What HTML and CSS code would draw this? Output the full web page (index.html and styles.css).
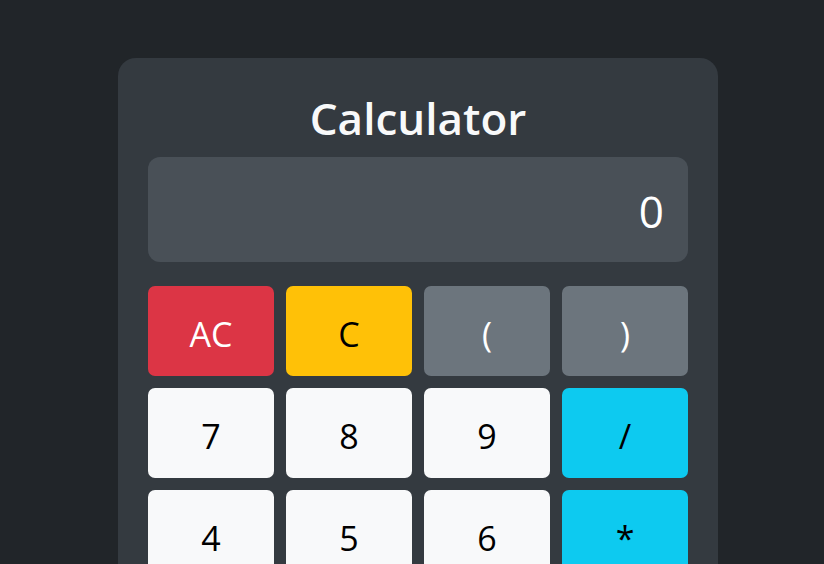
FILE: index.html
```html
<!DOCTYPE html>
<html lang="en">
<head>
<meta charset="utf-8">
<title>Calculator</title>
<link rel="stylesheet" href="styles.css">
</head>
<body>
<main class="calc">
  <h1 class="calc-title">Calculator</h1>
  <div class="calc-display">0</div>
  <div class="calc-keys">
    <button class="key key-danger">AC</button>
    <button class="key key-warning">C</button>
    <button class="key key-secondary">(</button>
    <button class="key key-secondary">)</button>
    <button class="key key-light">7</button>
    <button class="key key-light">8</button>
    <button class="key key-light">9</button>
    <button class="key key-info">/</button>
    <button class="key key-light">4</button>
    <button class="key key-light">5</button>
    <button class="key key-light">6</button>
    <button class="key key-info">*</button>
    <button class="key key-light">1</button>
    <button class="key key-light">2</button>
    <button class="key key-light">3</button>
    <button class="key key-info">-</button>
    <button class="key key-light">0</button>
    <button class="key key-light">.</button>
    <button class="key key-success">=</button>
    <button class="key key-info">+</button>
  </div>
</main>
</body>
</html>
```

FILE: styles.css
```css
* { box-sizing: border-box; }
html, body { margin: 0; padding: 0; }
body {
  background: #212529;
  font-family: "Open Sans", "Noto Sans", "Liberation Sans", sans-serif;
  color: #f8f9fa;
  display: flex;
  justify-content: center;
  padding: 58px 0 0 12px;
}
.calc {
  width: 600px;
  background: #343a40;
  border-radius: 18px;
  padding: 30px;
}
.calc-title {
  margin: 0 0 12px;
  padding-top: 4px;
  text-align: center;
  font-size: 44px;
  line-height: 53px;
  font-weight: 600;
  color: #f8f9fa;
}
.calc-display {
  background: #495057;
  border-radius: 12px;
  padding: 24px;
  height: 105px;
  text-align: right;
  font-size: 44px;
  line-height: 60px;
  color: #fff;
  margin-bottom: 24px;
}
.calc-keys {
  display: grid;
  grid-template-columns: repeat(4, 1fr);
  gap: 12px;
}
.key {
  height: 90px;
  border: none;
  border-radius: 7px;
  font-family: inherit;
  font-size: 34px;
  padding: 5px 0 0;
  cursor: pointer;
}
.key-danger { background: #dc3545; color: #fff; }
.key-warning { background: #ffc107; color: #000; }
.key-secondary { background: #6c757d; color: #fff; }
.key-light { background: #f8f9fa; color: #000; }
.key-info { background: #0dcaf0; color: #000; }
.key-success { background: #198754; color: #fff; }
```
